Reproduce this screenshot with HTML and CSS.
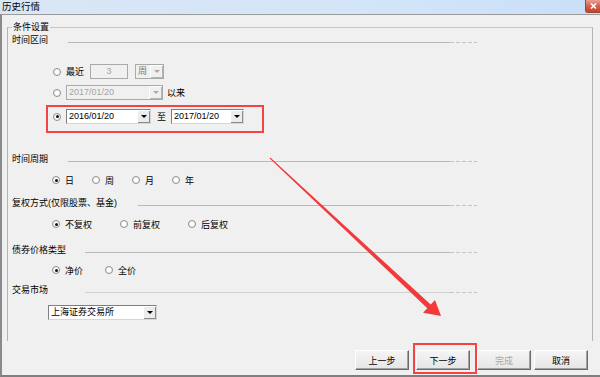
FILE: index.html
```html
<!DOCTYPE html>
<html lang="zh-CN">
<head>
  <meta charset="UTF-8">
  <title>历史行情</title>
  <link rel="stylesheet" href="styles.css">
</head>
<body>

  <div class="window">
    <div class="titlebar">
      <span class="title">历史行情</span>
      <span class="close">
        <svg width="7" height="6" viewBox="0 0 7 6"><path d="M1 0.5 L6 5.5 M6 0.5 L1 5.5" stroke="#fff" stroke-width="1.6"/></svg>
      </span>
    </div>

    <div class="client">
      <fieldset class="group">
        <legend>条件设置</legend>

        <div class="sec-head first"><span class="label">时间区间</span><span class="rule"></span><span class="dash"></span></div>

        <div class="row r1">
          <span class="opt"><i class="radio"></i>最近</span>
          <span class="field off n3">3</span>
          <span class="combo off week"><span class="val">周</span><span class="drop"></span></span>
        </div>

        <div class="row r2">
          <span class="opt"><i class="radio"></i></span>
          <span class="combo off since"><span class="val">2017/01/20</span><span class="drop"></span></span>
          <span class="txt">以来</span>
        </div>

        <div class="mark-range">
          <div class="row">
            <span class="opt"><i class="radio on"></i></span>
            <span class="combo from"><span class="val">2016/01/20</span><span class="drop"></span></span>
            <span class="txt to">至</span>
            <span class="combo until"><span class="val">2017/01/20</span><span class="drop"></span></span>
          </div>
        </div>

        <div class="sec-head h2"><span class="label">时间周期</span><span class="rule"></span><span class="dash"></span></div>
        <div class="row opts cycle">
          <span class="opt"><i class="radio on"></i>日</span>
          <span class="opt"><i class="radio"></i>周</span>
          <span class="opt"><i class="radio"></i>月</span>
          <span class="opt"><i class="radio"></i>年</span>
        </div>

        <div class="sec-head h3 wide"><span class="label">复权方式(仅限股票、基金)</span><span class="rule"></span><span class="dash"></span></div>
        <div class="row opts fq">
          <span class="opt"><i class="radio on"></i>不复权</span>
          <span class="opt"><i class="radio"></i>前复权</span>
          <span class="opt"><i class="radio"></i>后复权</span>
        </div>

        <div class="sec-head h4 mid"><span class="label">债券价格类型</span><span class="rule"></span><span class="dash"></span></div>
        <div class="row opts price">
          <span class="opt"><i class="radio on"></i>净价</span>
          <span class="opt"><i class="radio"></i>全价</span>
        </div>

        <div class="sec-head h5 mid"><span class="label">交易市场</span><span class="rule light"></span><span class="dash"></span></div>
        <div class="combo market"><span class="val">上海证券交易所</span><span class="drop"></span></div>
      </fieldset>

      <div class="buttons">
        <button class="btn">上一步</button>
        <span class="mark-btn"><button class="btn">下一步</button></span>
        <button class="btn" disabled>完成</button>
        <button class="btn cancel">取消</button>
      </div>
    </div>

    <svg class="arrow" width="600" height="377" viewBox="0 0 600 377">
      <polygon points="270.3,157.6 430.7,304.6 435,300 441,316 423,312.7 427.3,308.2 269.7,158.4" fill="#f33a3a"/>
    </svg>
  </div>

</body>
</html>
```

FILE: styles.css
```css
body {
  margin: 0;
  background-color: #f0f0f0;
  font-family: "Liberation Sans", "Noto Sans CJK SC", sans-serif;
  font-size: 9px;
  color: #000;
  overflow: hidden;
}

.window {
  position: relative;
  width: 600px;
  height: 377px;
  overflow: hidden;
}

/* title bar */
.titlebar {
  height: 14px;
  display: flex;
  justify-content: space-between;
  align-items: flex-start;
  background: linear-gradient(to right, #d9e7f5, #d3e5f8 60%, #c9e0f8);
}

.title {
  padding-left: 2px;
  line-height: 14px;
  font-size: 9.5px;
}

.close {
  width: 15px;
  height: 13px;
  box-sizing: border-box;
  border: 1px solid #9a4a3c;
  border-top: none;
  border-right: none;
  border-radius: 0 0 0 3px;
  background: linear-gradient(#eaa090, #d4634c 50%, #c3432c);
  display: flex;
  justify-content: center;
  align-items: center;
}

/* client area */
.client {
  height: 363px;
  box-sizing: border-box;
  border-top: 1px solid #9b9b9b;
  border-left: 2px solid #8a8a8a;
  border-bottom: 2px solid #7f7f7f;
  padding-left: 5px;
}

.group {
  width: 586px;
  height: 320px;
  box-sizing: border-box;
  margin: 6px 0 0 0;
  padding: 0 0 0 4px;
  border: 1px solid #b4b4b4;
  border-top-color: #c6c6c6;
  border-bottom: none;
  min-width: 0;
}

.group legend {
  padding: 0 1px;
  line-height: 12px;
}

/* section headers */
.sec-head {
  display: flex;
  width: 465px;
  height: 12px;
  line-height: 12px;
}

.sec-head .label {
  width: 56px;
  flex: none;
  white-space: nowrap;
}

.sec-head.wide .label { width: 126px; }
.sec-head.mid .label { width: 73px; }

.sec-head .rule {
  flex: 1;
  height: 1px;
  margin-top: 8px;
  background-color: #b9b9b9;
}

.sec-head .rule.light {
  background-color: #cfcfcf;
}

.sec-head .dash {
  width: 27px;
  height: 1px;
  margin-top: 8px;
  background: repeating-linear-gradient(to right, #c4c4c4 0 4px, transparent 4px 6px);
}

.sec-head.first { margin-top: 1px; }
.sec-head.h2 { margin-top: 20px; }
.sec-head.h3 { margin-top: 10px; }
.sec-head.h4 { margin-top: 13px; }
.sec-head.h5 { margin-top: 7px; }

/* rows */
.row {
  display: flex;
  align-items: center;
  height: 15px;
  white-space: nowrap;
}

.r1 { margin: 18px 0 0 41px; }
.r2 { margin: 6px 0 0 41px; }

.opt {
  display: inline-flex;
  align-items: center;
  flex: none;
}

.radio {
  width: 8px;
  height: 8px;
  box-sizing: border-box;
  margin-right: 5px;
  border: 1px solid #8f8f8f;
  border-radius: 50%;
  background: radial-gradient(#ffffff 40%, #e6e6e6);
  display: inline-flex;
  justify-content: center;
  align-items: center;
}

.radio.on::after {
  content: "";
  width: 3px;
  height: 3px;
  border-radius: 50%;
  background-color: #111;
}

.mark-range {
  width: 218px;
  box-sizing: border-box;
  margin: 5px 0 0 34px;
  padding: 2px 0 7px 5px;
  border: 2px solid #f44343;
}

.txt { margin-left: 4px; }
.txt.to { margin: 0 5px 0 6px; }

.opts { height: 14px; margin-left: 40px; }
.cycle { margin-top: 8px; }
.cycle .opt { width: 40px; }
.fq { margin-top: 8px; }
.fq .opt { width: 68px; }
.price { margin-top: 7px; }
.price .opt { width: 53px; }

/* edit fields and combo boxes */
.field,
.combo {
  height: 15px;
  box-sizing: border-box;
  border: 1px solid #7e7e7e;
  border-right-color: #d6d6d6;
  border-bottom-color: #d6d6d6;
  background-color: #fff;
  line-height: 13px;
}

.field {
  display: inline-block;
  text-align: center;
}

.field.n3 { width: 38px; margin-left: 6px; }

.combo {
  display: flex;
  flex: none;
}

.combo .val {
  flex: 1;
  padding-left: 2px;
  overflow: hidden;
}

.combo .drop {
  width: 13px;
  flex: none;
  box-sizing: border-box;
  background-color: #ececec;
  box-shadow: inset 1px 1px #ffffff, inset -1px -1px #8b8b8b;
  display: flex;
  justify-content: center;
  align-items: center;
}

.combo .drop::after {
  content: "";
  border-left: 3px solid transparent;
  border-right: 3px solid transparent;
  border-top: 3px solid #000;
}

.off {
  background-color: #f0f0f0;
  color: #a4a4a4;
  border-color: #a9a9a9;
}

.combo.off .drop {
  background-color: #f0f0f0;
  box-shadow: inset 1px 1px #ffffff, inset -1px -1px #b4b4b4;
}

.combo.off .drop::after {
  border-top-color: #a8a8a8;
}

.combo.week { width: 29px; margin-left: 7px; color: #7a7a7a; }
.combo.since { width: 97px; }
.combo.from { width: 85px; }
.combo.until { width: 73px; }
.combo.market { width: 109px; margin: 9px 0 0 36px; }

/* bottom buttons */
.buttons {
  display: flex;
  justify-content: flex-end;
  gap: 7px;
  margin-top: 9px;
  padding-right: 12px;
}

.btn {
  width: 54px;
  height: 20px;
  padding: 0;
  font-family: inherit;
  font-size: 9px;
  color: #000;
  border: 1px solid;
  border-color: #ffffff #6a6a6a #6a6a6a #ffffff;
  box-shadow: inset -1px -1px #a2a2a2;
  background: linear-gradient(#f4f4f4, #e6e6e6);
}

.btn:disabled {
  color: #a8a8a8;
}

.btn.cancel {
  margin-left: -4px;
}

.mark-btn {
  display: block;
  margin: -7px -7px -4px -3px;
  padding: 5px 5px 2px 1px;
  border: 2px solid #f44343;
}

.mark-btn .btn {
  display: block;
}

/* annotation arrow */
.arrow {
  position: absolute;
  left: 0;
  top: 0;
  pointer-events: none;
}
```
